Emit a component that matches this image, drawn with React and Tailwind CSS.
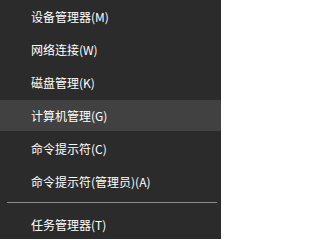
export default function App() {
  const items = [
    "设备管理器(M)",
    "网络连接(W)",
    "磁盘管理(K)",
    "计算机管理(G)",
    "命令提示符(C)",
    "命令提示符(管理员)(A)",
  ];
  return (
    <div
      className="w-[221px] h-[239px] bg-[#2b2b2b] text-white text-[12px] overflow-hidden pt-[1px]"
      style={{ fontFamily: '"Noto Sans CJK SC", "Noto Sans", sans-serif' }}
    >
      {items.map((t, i) => (
        <div
          key={t}
          className={
            i === 3
              ? "h-[31px] mb-[2px] flex items-center pl-[31px] bg-[#414141]"
              : "h-[31px] mb-[2px] flex items-center pl-[31px]"
          }
        >
          {t}
        </div>
      ))}
      <div className="pt-[3px] pb-[6px] pl-[7px] pr-[4px]">
        <div className="h-[1px] bg-[#8a8a8a]" />
      </div>
      <div className="h-[31px] flex items-center pl-[31px]">任务管理器(T)</div>
    </div>
  );
}
